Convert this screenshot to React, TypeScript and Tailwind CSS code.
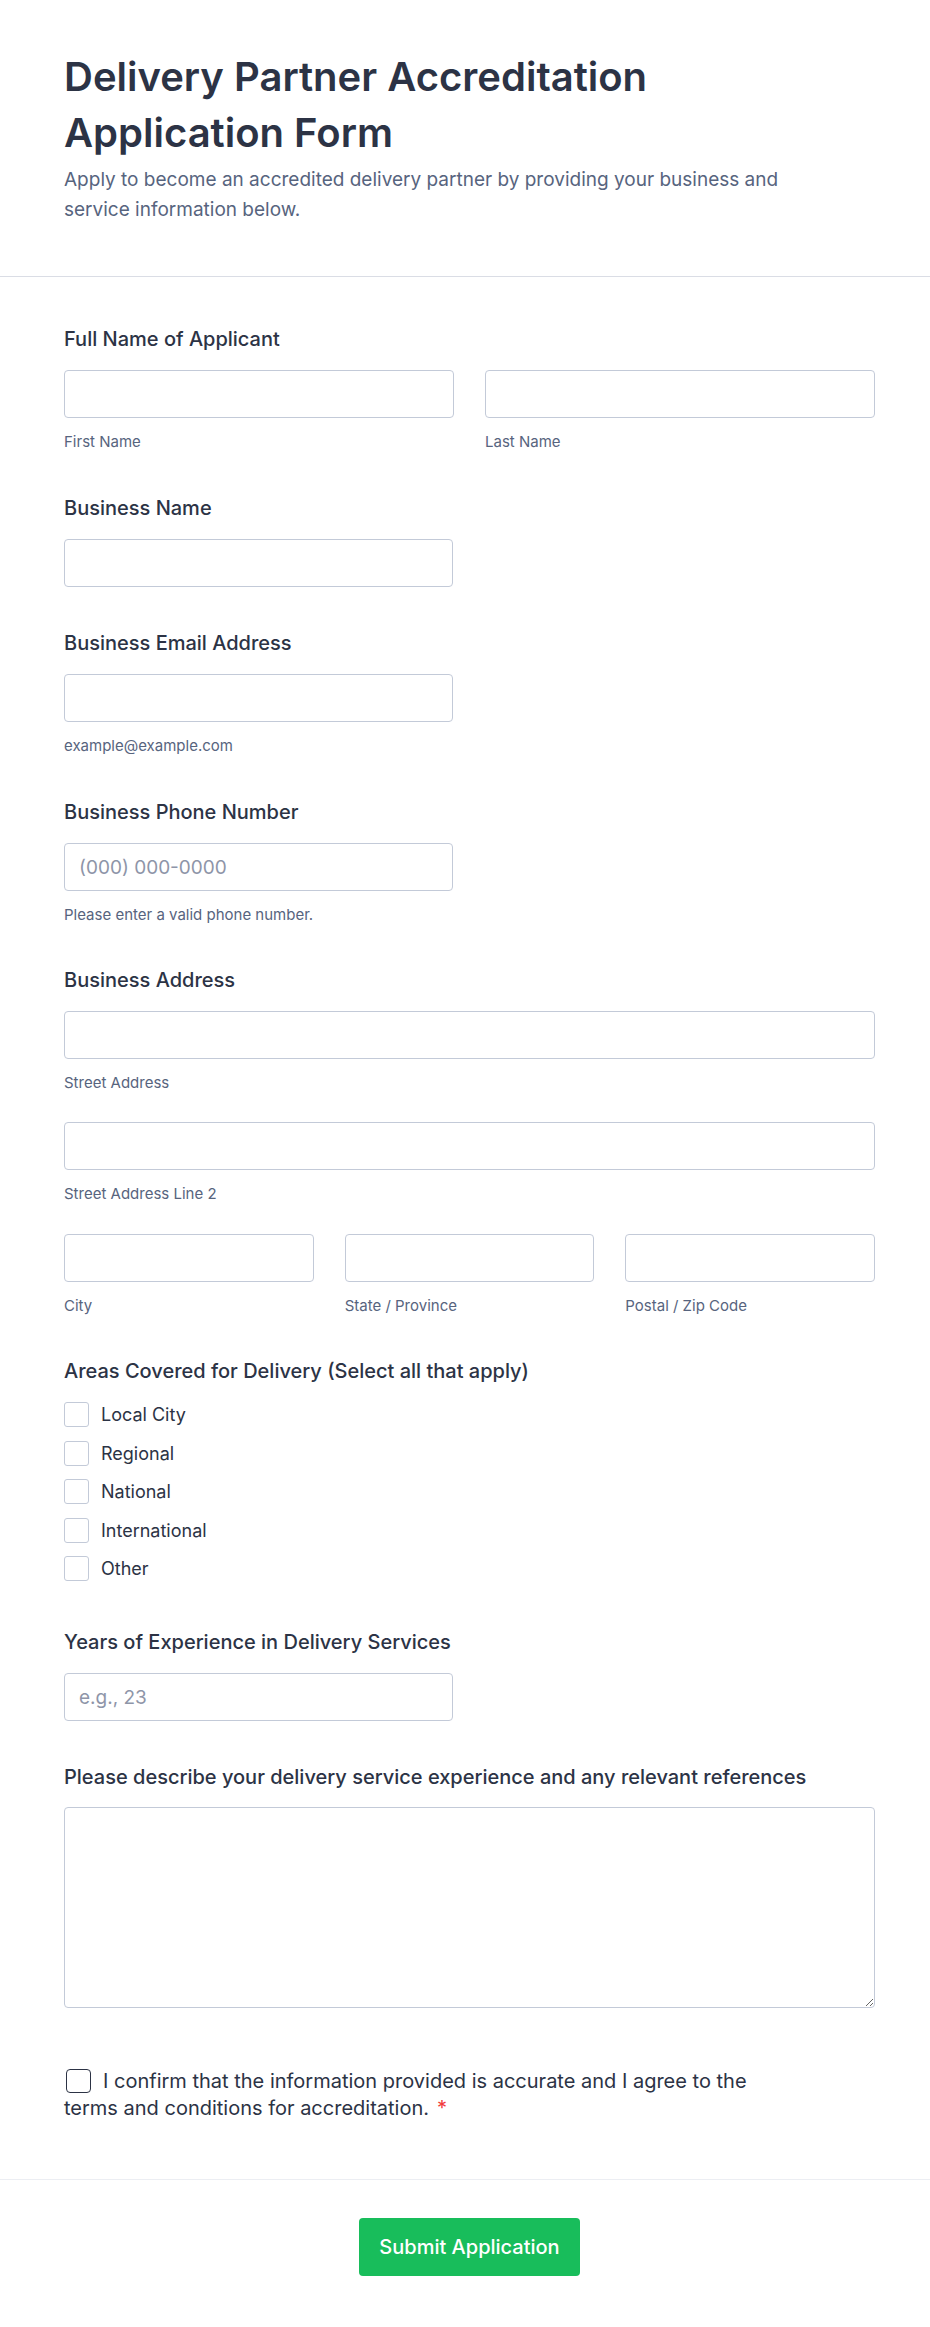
const inputCls =
  'block w-full h-12 rounded border border-[#c3cad8] bg-white px-[14px] text-[19px] text-[#2c3345] placeholder:text-[#8e95a8] outline-none';

const Label = ({ children }: { children: React.ReactNode }) => (
  <label className="block text-[20px] leading-7 font-medium text-[#2c3345]">{children}</label>
);

const SubLabel = ({ children }: { children: React.ReactNode }) => (
  <span className="block mt-[14px] text-[15px] leading-5 text-[#57647e]">{children}</span>
);

const areas = ['Local City', 'Regional', 'National', 'International', 'Other'];

export default function App() {
  return (
    <div className="min-h-screen bg-white text-[#2c3345]" style={{ fontFamily: 'Inter, "Noto Sans", sans-serif' }}>
      {/* Header */}
      <div className="border-b border-[#dadde5] pl-16 pr-[55px] pt-[49px] pb-[51px]">
        <h1 className="text-[40px] leading-[56px] font-semibold text-[#2c3345] max-w-[680px]">
          Delivery Partner Accreditation Application Form
        </h1>
        <p className="mt-1 text-[19px] leading-[30px] text-[#57647e] max-w-[780px]">
          Apply to become an accredited delivery partner by providing your business and service information below.
        </p>
      </div>

      {/* Fields */}
      <div className="pl-16 pr-[55px] pt-[48px]">
        <div>
          <Label>Full Name of Applicant</Label>
          <div className="mt-[17px] grid grid-cols-2 gap-[31px]">
            <div>
              <input className={inputCls} />
              <SubLabel>First Name</SubLabel>
            </div>
            <div>
              <input className={inputCls} />
              <SubLabel>Last Name</SubLabel>
            </div>
          </div>
        </div>

        <div className="mt-[42px]">
          <Label>Business Name</Label>
          <div className="mt-[17px] w-[389px]">
            <input className={inputCls} />
          </div>
        </div>

        <div className="mt-[42px]">
          <Label>Business Email Address</Label>
          <div className="mt-[17px] w-[389px]">
            <input className={inputCls} />
            <SubLabel>example@example.com</SubLabel>
          </div>
        </div>

        <div className="mt-[42px]">
          <Label>Business Phone Number</Label>
          <div className="mt-[17px] w-[389px]">
            <input className={inputCls} placeholder="(000) 000-0000" />
            <SubLabel>Please enter a valid phone number.</SubLabel>
          </div>
        </div>

        <div className="mt-[41px]">
          <Label>Business Address</Label>
          <div className="mt-[17px]">
            <input className={inputCls} />
            <SubLabel>Street Address</SubLabel>
          </div>
          <div className="mt-[29px]">
            <input className={inputCls} />
            <SubLabel>Street Address Line 2</SubLabel>
          </div>
          <div className="mt-[30px] grid grid-cols-3 gap-[31px]">
            <div>
              <input className={inputCls} />
              <SubLabel>City</SubLabel>
            </div>
            <div>
              <input className={inputCls} />
              <SubLabel>State / Province</SubLabel>
            </div>
            <div>
              <input className={inputCls} />
              <SubLabel>Postal / Zip Code</SubLabel>
            </div>
          </div>
        </div>

        <div className="mt-[41px]">
          <Label>Areas Covered for Delivery (Select all that apply)</Label>
          <div className="mt-[17px] flex flex-col items-start gap-[13.5px]">
            {areas.map((a) => (
              <label key={a} className="inline-flex items-center gap-3 h-[25px]">
                <span className="w-[25px] h-[25px] rounded-[3px] border border-[#c3cad8] bg-white shrink-0" />
                <span className="text-[18px] leading-[25px] text-[#2c3345]">{a}</span>
              </label>
            ))}
          </div>
        </div>

        <div className="mt-[47px]">
          <Label>Years of Experience in Delivery Services</Label>
          <div className="mt-[17px] w-[389px]">
            <input className={inputCls} placeholder="e.g., 23" />
          </div>
        </div>

        <div className="mt-[42px]">
          <Label>Please describe your delivery service experience and any relevant references</Label>
          <textarea className="mt-[16px] block w-full h-[201px] rounded border border-[#c3cad8] bg-white p-3 text-[17px] outline-none" />
        </div>

        <div className="mt-[60px] pb-[57px] max-w-[700px] text-[20px] leading-[27px] text-[#2c3345]">
          <span className="inline-block align-[-5px] w-[25px] h-[24px] ml-[2px] mr-3 rounded border-[1.5px] border-[#2c3345]" />
          I confirm that the information provided is accurate and I agree to the terms and conditions for accreditation.
          <span className="ml-2 text-[#f23a3c]">*</span>
        </div>
      </div>

      {/* Footer */}
      <div className="border-t border-[#eceef3] pl-16 pr-[55px] pt-[38px] pb-[51px] flex justify-center">
        <button className="w-[221px] h-[58px] rounded bg-[#18bd5b] text-white text-[20px] font-medium">
          Submit Application
        </button>
      </div>
    </div>
  );
}
